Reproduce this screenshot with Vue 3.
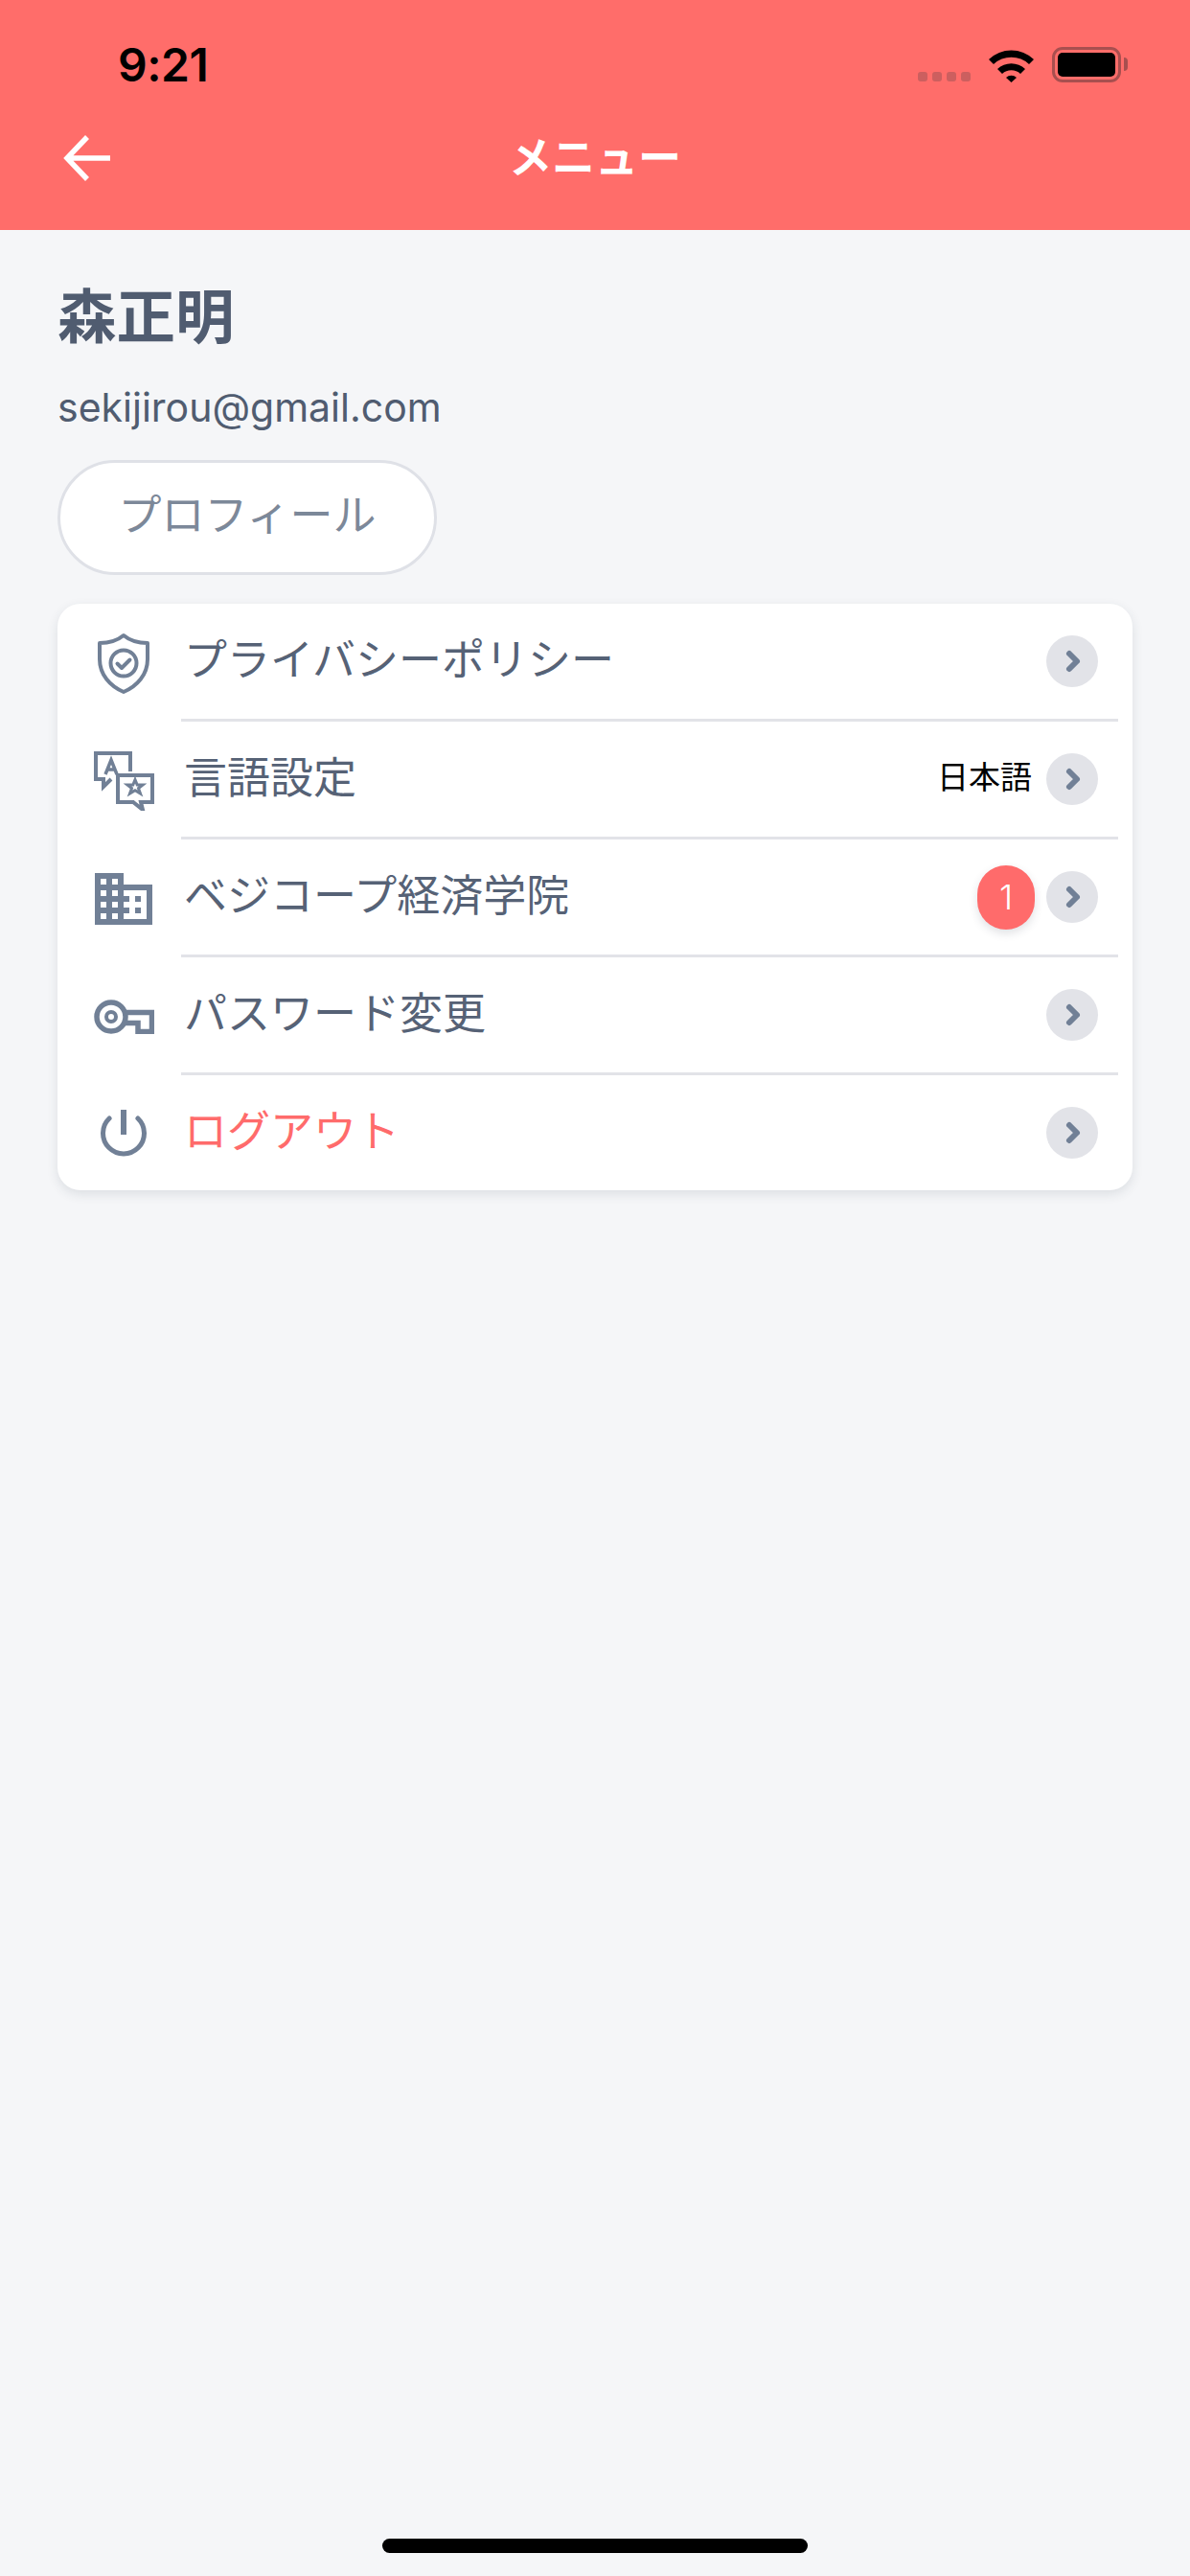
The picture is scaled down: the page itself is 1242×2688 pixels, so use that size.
<template>
  <div class="page">
    <header class="cabecalho">
      <div class="status">
        <span class="hora">9:21</span>
        <div class="status-dir">
          <div class="sinal"><i></i><i></i><i></i><i></i></div>
          <svg class="wifi" width="47" height="36" viewBox="0 0 47 36">
            <path d="M0 12A34 34 0 0 1 47 12L42 17A27 27 0 0 0 5 17Z" />
            <path d="M9 22A21 21 0 0 1 38 22L33 27A14 14 0 0 0 14 27Z" />
            <path d="M18 31A8 8 0 0 1 29 31L23.5 36Z" />
          </svg>
          <div class="bateria"><div class="carga"></div></div>
          <div class="ponta"></div>
        </div>
      </div>
      <nav class="nav">
        <svg width="49" height="48" viewBox="0 0 49 48" fill="none" stroke="#fff" stroke-width="5.5">
          <path d="M49 24H5M25 2L4 24L25 46" />
        </svg>
        <h1 class="titulo">メニュー</h1>
        <span></span>
      </nav>
    </header>

    <main class="conteudo">
      <h2 class="nome">森正明</h2>
      <p class="email">sekijirou@gmail.com</p>
      <button class="perfil" type="button">プロフィール</button>

      <ul class="cartao">
        <li v-for="item in itens" :key="item.icone" class="linha">
          <div class="icone">
            <svg v-if="item.icone === 'escudo'" width="54" height="64" viewBox="0 0 54 64" fill="none" stroke="#718096" stroke-width="4" stroke-linejoin="round">
              <path d="M27 3C33 8 41 11 52 11V28C52 44 41 56 27 62C13 56 2 44 2 28V11C13 11 21 8 27 3Z" />
              <circle cx="27" cy="32" r="13.5" />
              <path d="M20.5 32.5L25 37L33.5 28.5" stroke-linecap="round" />
            </svg>
            <svg v-else-if="item.icone === 'idioma'" width="63" height="62" viewBox="0 0 63 62" fill="none" stroke="#718096" stroke-width="4">
              <path d="M38 21V2H2V29H10V37L18 29" />
              <path d="M25 25H61V53H49L51 61L41 53H25Z" />
              <path d="M12 24L18 9L24 24M14 19H22" stroke-width="3.5" />
              <path d="M43 29.500L45.200 35H51L46.500 38.500L48.500 44L43 40.800L37.500 44L39.500 38.500L35 35H40.800Z" stroke-width="3" />
            </svg>
            <svg v-else-if="item.icone === 'predio'" width="60" height="54" viewBox="0 0 60 54">
              <path fill="#718096" fill-rule="evenodd" d="M0 0H30V12H60V54H0ZM6 6V12H12V6ZM18 6V12H24V6ZM6 18V24H12V18ZM18 18V24H24V18ZM6 30V36H12V30ZM18 30V36H24V30ZM6 42V48H12V42ZM18 42V48H24V42ZM30 18V48H54V18ZM30 24H36V30H30ZM42 24H48V30H42ZM30 36H36V42H30ZM42 36H48V42H42Z" />
            </svg>
            <svg v-else-if="item.icone === 'chave'" width="63" height="36" viewBox="0 0 63 36" fill="none" stroke="#718096" stroke-width="5.500">
              <circle cx="18" cy="18" r="15" stroke-width="5.500" />
              <circle cx="18" cy="18" r="5" stroke-width="4" />
              <path d="M30 13.500H60.500V33.500H46V24.500H30" />
            </svg>
            <svg v-else width="48" height="49" viewBox="0 0 48 49" fill="none" stroke="#718096" stroke-width="5">
              <path d="M9.100 9A21.500 21.500 0 1 0 38.900 9" stroke-linecap="round" />
              <path d="M24 0V26" stroke-width="6" />
            </svg>
          </div>
          <div class="corpo">
            <span class="rotulo" :class="{ sair: item.sair }">{{ item.rotulo }}</span>
            <span v-if="item.valor" class="valor">{{ item.valor }}</span>
            <span v-if="item.badge" class="badge">{{ item.badge }}</span>
            <div class="seta">
              <svg width="54" height="54" viewBox="0 0 54 54" fill="none" stroke="#718096" stroke-width="6" stroke-linecap="round" stroke-linejoin="round">
                <path d="M24 19L32 27L24 35" />
              </svg>
            </div>
          </div>
        </li>
      </ul>
    </main>

    <div class="home"></div>
  </div>
</template>

<script setup>
const itens = [
  { icone: 'escudo', rotulo: 'プライバシーポリシー' },
  { icone: 'idioma', rotulo: '言語設定', valor: '日本語' },
  { icone: 'predio', rotulo: 'ベジコープ経済学院', badge: 1 },
  { icone: 'chave', rotulo: 'パスワード変更' },
  { icone: 'energia', rotulo: 'ログアウト', sair: true }
]
</script>

<style scoped>
.page {
  width: 1242px; height: 2688px; background: #f5f6f8; display: flex; flex-direction: column;
  font-family: Inter, "Noto Sans CJK JP", sans-serif;
}
.cabecalho { height: 240px; background: #ff6d6a; padding-top: 49px; box-sizing: border-box; }
.status { display: flex; justify-content: space-between; align-items: flex-end; height: 37px; padding: 0 65px 0 123px; }
.hora { font-size: 48px; line-height: 37px; font-weight: 600; color: #000; letter-spacing: -0.5px; }
.status-dir { display: flex; align-items: flex-end; }
.sinal { display: flex; gap: 5px; margin-right: 19px; margin-bottom: 1px; }
.sinal i { width: 10px; height: 10px; border-radius: 3px; background: #cc5f5f; }
.wifi { fill: #000; margin-right: 19px; }
.bateria { width: 72px; height: 37px; box-sizing: border-box; border: 3px solid #a84f4f; border-radius: 11px; padding: 3px; }
.carga { height: 100%; background: #000; border-radius: 5px; }
.ponta { width: 4px; height: 14px; background: #a84f4f; border-radius: 0 7px 7px 0; margin: 0 0 12px 3px; }
.nav { display: grid; grid-template-columns: 1fr auto 1fr; align-items: center; height: 48px; margin-top: 55px; padding: 0 66px; }
.titulo { margin: 0 0 6px; font-size: 45px; line-height: 42px; font-weight: 700; color: #fff; font-family: "Noto Sans CJK JP", sans-serif; }
.conteudo { padding: 57px 60px 0; }
.nome { margin: 0; font-size: 61.5px; line-height: 60px; font-weight: 700; color: #505c70; font-family: "Noto Sans CJK JP", sans-serif; }
.email { margin: 41px 0 0; font-size: 41px; line-height: 54px; color: #505c70; }
.perfil {
  display: block; width: 396px; height: 120px; margin-top: 28px; background: #fff; border: 3px solid #dfe1e7; border-radius: 60px;
  font-size: 45px; color: #7c8899; font-family: "Noto Sans CJK JP", sans-serif; padding: 0 0 12px;
}
.cartao { list-style: none; margin: 30px 0 0; padding: 0; background: #fff; border-radius: 24px; box-shadow: 0 4px 12px rgba(45, 55, 72, 0.12); }
.linha { display: flex; }
.icone { width: 129px; padding-left: 9px; box-sizing: border-box; display: flex; align-items: center; justify-content: center; flex: none; }
.corpo {
  flex: 1; display: flex; align-items: center; height: 123px; box-sizing: border-box; border-bottom: 3px solid #e2e3e8;
  margin-right: 15px; padding-right: 21px;
}
.linha:last-child .corpo { height: 120px; border-bottom: none; }
.rotulo { flex: 1; font-size: 45px; color: #566276; padding: 0 0 10px 3px; font-family: "Noto Sans CJK JP", sans-serif; }
.rotulo.sair { color: #ff6b6b; }
.valor { font-size: 33px; color: #000; margin-right: 15px; padding-bottom: 8px; font-family: "Noto Sans CJK JP", sans-serif; }
.badge {
  width: 60px; height: 67px; border-radius: 30px; background: #ff6b6b; color: #fff; font-size: 36px; font-weight: 300;
  display: flex; align-items: center; justify-content: center; margin-right: 12px; box-shadow: 0 4px 10px rgba(45, 55, 72, 0.15);
}
.seta { width: 54px; height: 54px; border-radius: 50%; background: #e2e3e8; flex: none; }
.seta svg { display: block; }
.home { width: 444px; height: 15px; border-radius: 8px; background: #000; margin: auto auto 24px; }
</style>
